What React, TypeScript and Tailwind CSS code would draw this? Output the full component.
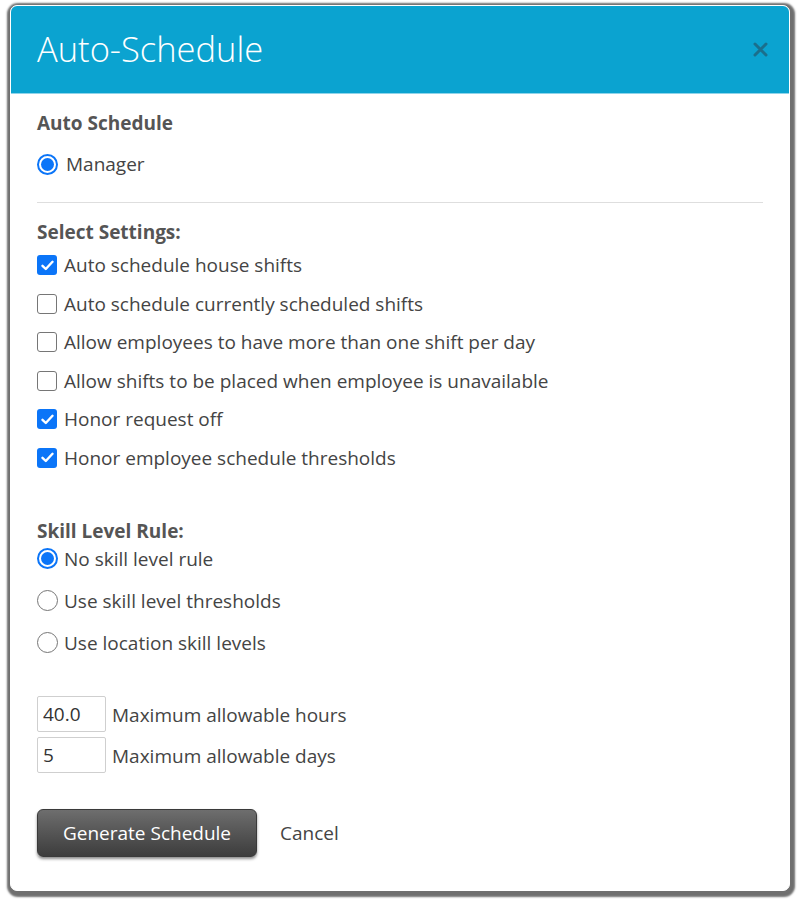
import React, { useState } from 'react';

const font = { fontFamily: '"Open Sans", "Noto Sans", sans-serif' };

const Check: React.FC<{ checked: boolean }> = ({ checked }) =>
  checked ? (
    <span className="flex h-[20px] w-[20px] shrink-0 items-center justify-center rounded-[3px] bg-[#0b75f8]">
      <svg width="13" height="11" viewBox="0 0 13 11" fill="none">
        <path d="M1.5 5.8 L4.8 9 L11.5 1.8" stroke="white" strokeWidth="2.4" strokeLinecap="round" strokeLinejoin="round" />
      </svg>
    </span>
  ) : (
    <span className="h-[20px] w-[20px] shrink-0 rounded-[3px] border-[1.5px] border-[#767676] bg-white" />
  );

const Radio: React.FC<{ checked: boolean }> = ({ checked }) =>
  checked ? (
    <span className="flex h-[21px] w-[21px] shrink-0 items-center justify-center rounded-full border-2 border-[#0b75f8] bg-white">
      <span className="h-[13px] w-[13px] rounded-full bg-[#0b75f8]" />
    </span>
  ) : (
    <span className="h-[21px] w-[21px] shrink-0 rounded-full border-[1.5px] border-[#767676] bg-white" />
  );

const settings = [
  { label: 'Auto schedule house shifts', on: true },
  { label: 'Auto schedule currently scheduled shifts', on: false },
  { label: 'Allow employees to have more than one shift per day', on: false },
  { label: 'Allow shifts to be placed when employee is unavailable', on: false },
  { label: 'Honor request off', on: true },
  { label: 'Honor employee schedule thresholds', on: true },
];

const skillRules = ['No skill level rule', 'Use skill level thresholds', 'Use location skill levels'];

export default function App() {
  const [checked, setChecked] = useState<boolean[]>(settings.map(s => s.on));
  const [rule, setRule] = useState(0);

  return (
    <div className="min-h-[905px] w-[802px] bg-white pl-[10px] pt-[5px]" style={font}>
      <div className="h-[886px] w-[780px] overflow-hidden rounded-[7px] border border-white bg-white shadow-[1px_2px_2px_4px_#6f6f6f]">
        <div className="flex h-[88px] items-center justify-between border-b border-[#8fd4ea] bg-[#0ba3d0] pl-[26px] pr-[21px]">
          <h1 className="text-[34.5px] font-light leading-none text-white">Auto-Schedule</h1>
          <svg width="15" height="15" viewBox="0 0 15 15">
            <path d="M2 2 L13 13 M13 2 L2 13" stroke="#1b6f8c" strokeWidth="3" strokeLinecap="round" />
          </svg>
        </div>

        <div className="px-[26px] pt-[17px] text-[19px] leading-[24px] text-[#444]">
          <div className="font-bold text-[#555]">Auto Schedule</div>
          <div className="mt-[17px] flex items-center gap-[8px]">
            <Radio checked />
            <span>Manager</span>
          </div>

          <hr className="mt-[26px] border-[#dedede]" />

          <div className="mt-[17px] font-bold text-[#555]">Select Settings:</div>
          <div className="mt-[9px] flex flex-col gap-[14.6px]">
            {settings.map((s, i) => (
              <label
                key={s.label}
                className="flex cursor-pointer items-center gap-[7px]"
                onClick={() => setChecked(prev => prev.map((v, j) => (j === i ? !v : v)))}
              >
                <Check checked={checked[i]} />
                <span>{s.label}</span>
              </label>
            ))}
          </div>

          <div className="mt-[49px] font-bold text-[#555]">Skill Level Rule:</div>
          <div className="mt-[4px] flex flex-col gap-[18px]">
            {skillRules.map((r, i) => (
              <label key={r} className="flex cursor-pointer items-center gap-[6px]" onClick={() => setRule(i)}>
                <Radio checked={rule === i} />
                <span>{r}</span>
              </label>
            ))}
          </div>

          <div className="mt-[41px] flex flex-col gap-[5px]">
            <div className="flex items-center gap-[6px]">
              <input
                defaultValue="40.0"
                className="h-[36px] w-[69px] rounded-[2px] border border-[#cfcfcf] px-[5px] text-[19px] text-[#333] outline-none"
              />
              <span className="pt-[3px]">Maximum allowable hours</span>
            </div>
            <div className="flex items-center gap-[6px]">
              <input
                defaultValue="5"
                className="h-[36px] w-[69px] rounded-[2px] border border-[#cfcfcf] px-[5px] text-[19px] text-[#333] outline-none"
              />
              <span className="pt-[3px]">Maximum allowable days</span>
            </div>
          </div>

          <div className="mt-[36px] flex items-center gap-[23px]">
            <button className="h-[48px] w-[220px] rounded-[6px] border border-[#3a3a3a] bg-gradient-to-b from-[#6e6e6e] to-[#3d3d3d] text-[19px] text-white shadow-[0_2px_3px_rgba(0,0,0,0.45)]">
              Generate Schedule
            </button>
            <button className="text-[19px] text-[#444]">Cancel</button>
          </div>
        </div>
      </div>
    </div>
  );
}
